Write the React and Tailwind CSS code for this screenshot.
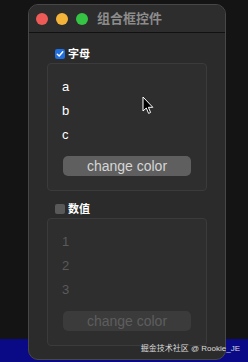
import React from "react";

const items1 = ["a", "b", "c"];
const items2 = ["1", "2", "3"];

const GroupBox = ({ title, checked, items, disabled }) => (
  <div className="flex flex-col">
    {/* checkbox header */}
    <div className="flex items-center h-[14px] pl-[8px] gap-[3px]">
      {checked ? (
        <div className="w-[10px] h-[10px] rounded-[2px] bg-[#1f6fe0] flex items-center justify-center">
          <svg width="8" height="8" viewBox="0 0 8 8">
            <path d="M1.3 4.2 L3.2 6 L6.8 1.8" fill="none" stroke="#fff" strokeWidth="1.4" strokeLinecap="round" strokeLinejoin="round" />
          </svg>
        </div>
      ) : (
        <div className="w-[10px] h-[10px] rounded-[2px] bg-[#595959]" />
      )}
      <span className="text-[11px] leading-none font-bold text-white">{title}</span>
    </div>
    {/* box */}
    <div className="mt-[2px] h-[128px] w-[160px] rounded-[4px] border border-[#3b3b3b] bg-[#2e2e2e] pl-[14px] pt-[10px] flex flex-col">
      {items.map((it) => (
        <div
          key={it}
          className={`h-[24px] flex items-center text-[13px] leading-none ${
            disabled ? "text-[#5a5a5a]" : "text-white"
          }`}
        >
          {it}
        </div>
      ))}
      <button
        className={`mt-[10px] ml-[1px] w-[128px] h-[20px] rounded-[5px] text-[14px] leading-none flex items-center justify-center ${
          disabled ? "bg-[#3b3b3b] text-[#5e5e5e]" : "bg-[#5f5f5f] text-[#d6d6d6]"
        }`}
      >
        change color
      </button>
    </div>
  </div>
);

const App = () => {
  return (
    <div
      className="relative w-[248px] h-[362px] bg-[#141414] overflow-hidden"
      style={{ fontFamily: '"Liberation Sans", "Noto Sans CJK SC", sans-serif' }}
    >
      {/* desktop strip behind */}
      <div className="absolute left-0 right-0 bottom-0 h-[23px] bg-[#0a0a86]" />

      {/* window */}
      <div className="relative ml-[28px] mt-[4px] w-[198px] h-[356px] rounded-[10px] border border-[#474747] bg-[#2b2b2b] flex flex-col overflow-hidden">
        {/* title bar */}
        <div className="h-[28px] flex items-center pl-[7px] border-b border-[#111] bg-[#2d2d2d] shrink-0">
          <div className="w-[12px] h-[12px] rounded-full bg-[#ee5a55]" />
          <div className="w-[12px] h-[12px] rounded-full bg-[#f4b43a] ml-[8px]" />
          <div className="w-[12px] h-[12px] rounded-full bg-[#35c444] ml-[8px]" />
          <span className="ml-[9px] text-[13px] font-bold text-[#8c8c8c] leading-none">组合框控件</span>
        </div>
        {/* content */}
        <div className="flex flex-col pl-[18px] pt-[14px] gap-[11px]">
          <GroupBox title="字母" checked items={items1} />
          <GroupBox title="数值" items={items2} disabled />
        </div>
      </div>

      {/* mouse cursor */}
      <svg className="absolute left-[142px] top-[96px]" width="12" height="19" viewBox="0 0 12 19">
        <path d="M1 1 L1 15 L4.3 12 L6.6 17.4 L8.6 16.5 L6.4 11.3 L10.8 11.3 Z" fill="#000" stroke="#fff" strokeWidth="1" strokeLinejoin="round" />
      </svg>

      {/* watermark */}
      <span className="absolute right-[8px] top-[345px] text-[8px] leading-none text-[#dcdcdc] whitespace-nowrap">
        掘金技术社区 @ Rookie_JE
      </span>
    </div>
  );
};

export default App;
